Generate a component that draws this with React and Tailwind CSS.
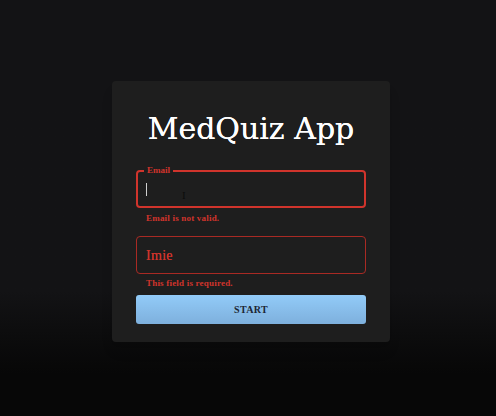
export default function App() {
  return (
    <div className="min-h-[416px] w-full flex justify-center pl-[6px] bg-gradient-to-b from-[#131315] from-70% to-[#070707] to-90% font-['DejaVu_Serif',serif]">
      <div className="mt-[81px] mb-[74px] w-[278px] rounded bg-[#1e1e1e] px-6 pt-[30px] pb-[17px] shadow-lg flex flex-col">
        <h1 className="text-center text-[30px] leading-[36px] text-white [text-shadow:0_0_0.4px_#fff]">MedQuiz App</h1>

        <div className="mt-[23px] flex flex-col font-['Liberation_Serif',serif]">
          {/* Email (focused, error) */}
          <div className="relative flex h-[38px] items-start gap-[35px] rounded border-2 border-[#d0342c] pl-[8px] pt-[11px]">
            <span className="absolute -top-[8px] left-[6px] bg-[#1e1e1e] px-[3px] text-[9px] leading-[12px] font-bold text-[#d0342c]">Email</span>
            <span className="h-[13px] w-px bg-[#cfcfcf]" />
            <span className="mt-[7px] text-[11px] leading-none text-[#0c0c0c]">I</span>
          </div>
          <p className="mt-[3px] ml-[10px] text-[9px] leading-[14px] font-bold tracking-[0.2px] text-[#d0342c]">Email is not valid.</p>

          {/* Imie (error) */}
          <div className="mt-[11px] flex h-[38px] items-center rounded border border-[#a92a24] px-[9px]">
            <span className="text-[14px] text-[#d0342c] tracking-[0.3px] [text-shadow:0_0_0.3px_#d0342c]">Imie</span>
          </div>
          <p className="mt-[2px] ml-[10px] text-[9px] leading-[14px] font-bold tracking-[0.2px] text-[#d0342c]">This field is required.</p>

          <button className="mt-[5px] h-[29px] w-full rounded-[3px] bg-gradient-to-b from-[#92cbf8] to-[#7eb0dd] text-[10px] font-bold text-[#1c2633] tracking-[0.3px]">
            START
          </button>
        </div>
      </div>
    </div>
  );
}
